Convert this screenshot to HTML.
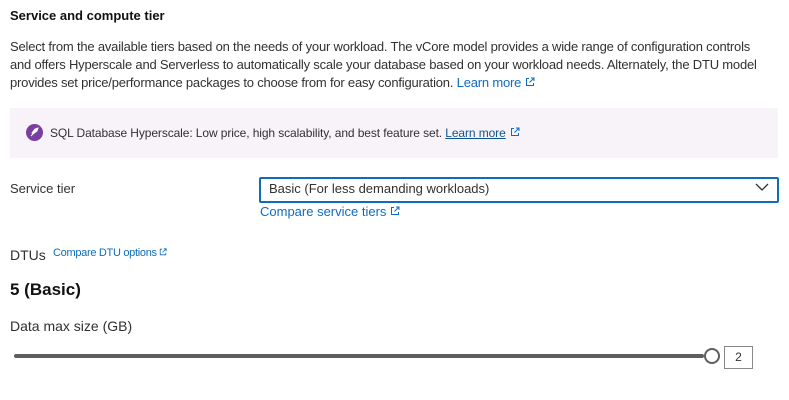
<!DOCTYPE html>
<html><head><style>
body{margin:0;width:789px;height:400px;background:#fff;font-family:"Liberation Sans",sans-serif;color:#323130;position:relative;overflow:hidden}
.a{position:absolute;white-space:nowrap}
a{color:#0f6cbd;text-decoration:none}
.ext{display:inline-block;margin-left:4px;vertical-align:0}
</style></head><body>
<svg width="0" height="0" style="position:absolute"><defs><symbol id="e" viewBox="0 0 10 10"><path d="M4 1.5H1.5v7h7V6M6 1h3v3M9 1L4.5 5.5" fill="none" stroke="#0f6cbd" stroke-width="1"/></symbol></defs></svg>
<div class="a" style="left:10px;top:8px;font-size:13px;font-weight:bold;color:#111">Service and compute tier</div>
<div class="a" style="left:10px;top:38px;font-size:13px;line-height:18px;letter-spacing:-0.2px">Select from the available tiers based on the needs of your workload. The vCore model provides a wide range of configuration controls<br>and offers Hyperscale and Serverless to automatically scale your database based on your workload needs. Alternately, the DTU model<br>provides set price/performance packages to choose from for easy configuration. <a>Learn more</a><svg class="ext" width="10" height="10"><use href="#e"/></svg></div>
<div class="a" style="left:10px;top:108px;width:768px;height:50px;background:#f7f3f9"></div>
<svg class="a" style="left:26px;top:124px" width="17" height="17"><circle cx="8.5" cy="8.5" r="8.5" fill="#7a3ea0"/><path d="M5 12l2-2M6 9l3-4 3-1-1 3-4 3z" fill="#fff" stroke="#fff" stroke-width="1"/></svg>
<div class="a" style="left:50px;top:126px;font-size:12px;letter-spacing:-0.1px">SQL Database Hyperscale: Low price, high scalability, and best feature set. <span style="text-decoration:underline;color:#0f548c">Learn more</span><svg class="ext" width="10" height="10"><use href="#e"/></svg></div>
<div class="a" style="left:10px;top:181px;font-size:13px">Service tier</div>
<div class="a" style="left:259px;top:177px;width:516px;height:22px;border:2px solid #0f6cbd;border-radius:2px"></div>
<div class="a" style="left:269px;top:181px;font-size:13px">Basic (For less demanding workloads)</div>
<svg class="a" style="left:755px;top:182px" width="14" height="10"><path d="M1 2 L7 8 L13 2" fill="none" stroke="#323130" stroke-width="1.3"/></svg>
<div class="a" style="left:260px;top:204px;font-size:13px"><a>Compare service tiers</a><svg class="ext" width="10" height="10"><use href="#e"/></svg></div>
<div class="a" style="left:10px;top:247px;font-size:14px">DTUs</div>
<div class="a" style="left:53px;top:247px;font-size:11px;letter-spacing:-0.3px"><a>Compare DTU options</a><svg class="ext" width="8" height="8" style="margin-left:2px"><use href="#e"/></svg></div>
<div class="a" style="left:10px;top:280px;font-size:17px;font-weight:bold;color:#111">5 (Basic)</div>
<div class="a" style="left:10px;top:318px;font-size:14px">Data max size (GB)</div>
<div class="a" style="left:14px;top:354px;width:690px;height:4px;background:#605e5c;border-radius:2px"></div>
<div class="a" style="left:704px;top:348px;width:12px;height:12px;border:2px solid #605e5c;border-radius:50%;background:#fff"></div>
<div class="a" style="left:724px;top:346px;width:27px;height:21px;border:1px solid #8a8886;font-size:12px;text-align:center;line-height:21px">2</div>
</body></html>
